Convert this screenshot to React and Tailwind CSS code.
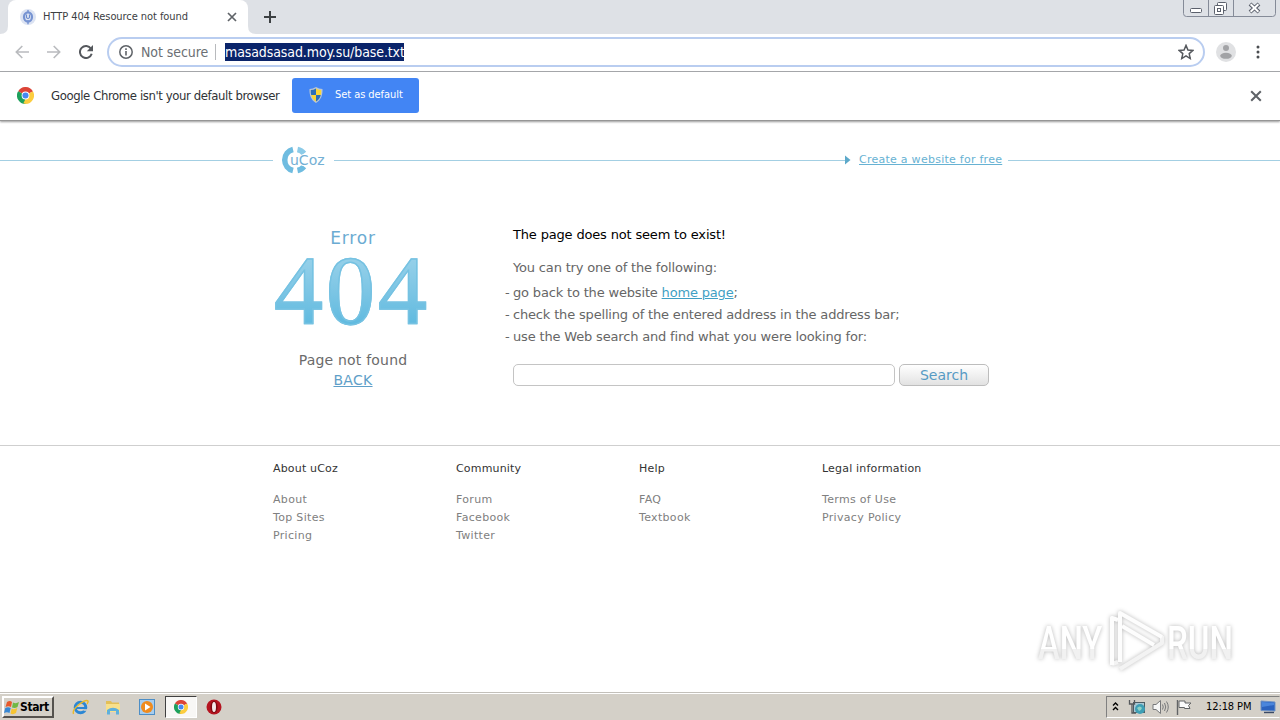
const columns = [
  { title: "About uCoz", links: ["About", "Top Sites", "Pricing"] },
  { title: "Community", links: ["Forum", "Facebook", "Twitter"] },
  { title: "Help", links: ["FAQ", "Textbook"] },
  { title: "Legal information", links: ["Terms of Use", "Privacy Policy"] },
];

const ChromeLogo = ({ size }) => (
  <svg width={size} height={size} viewBox="0 0 48 48">
    <path d="M24 24 L3.2 12 A24 24 0 0 1 44.8 12 Z" fill="#dc4437" />
    <path d="M24 24 L44.8 12 A24 24 0 0 1 24 48 Z" fill="#fccd3f" />
    <path d="M24 24 L24 48 A24 24 0 0 1 3.2 12 Z" fill="#1da05c" />
    <path d="M24 13 H45.3 L44.8 12 H24 Z" fill="#dc4437" />
    <path d="M33.5 29.5 L24 48 L18 46 L24 34 Z" fill="#fccd3f" />
    <circle cx="24" cy="24" r="11" fill="#fff" />
    <circle cx="24" cy="24" r="8.6" fill="#4688f1" />
  </svg>
);

const Cross = ({ size }) => (
  <svg width={size} height={size} viewBox="0 0 10 10" stroke="#5f6368" strokeWidth="1.7">
    <path d="M1 1 L9 9 M9 1 L1 9" />
  </svg>
);

const Favicon = () => (
  <svg width="16" height="16" viewBox="0 0 16 16">
    <circle cx="8" cy="8" r="8" fill="#dce3f2" />
    <ellipse cx="8" cy="8" rx="4" ry="4.6" fill="none" stroke="#7693d2" strokeWidth="2.2" />
    <path d="M8 1 V4 M8 11 V15.2" stroke="#7693d2" strokeWidth="1.4" />
    <path d="M6.5 5.5 V8.5 Q8 10.5 9.5 8.5 V5.5" fill="none" stroke="#6c8bcd" strokeWidth="1.1" />
  </svg>
);

const Shield = () => (
  <svg width="14" height="16" viewBox="0 0 14 16">
    <path d="M7 0 Q10 2 13.5 2 C13.8 8 12 13 7 16 C2 13 0.2 8 0.5 2 Q4 2 7 0 Z" fill="#b9c6d4" />
    <path d="M7 1.5 Q4.5 3 1.8 3 Q1.6 5.5 2.2 8 H7 Z" fill="#2d6fb8" />
    <path d="M7 1.5 Q9.5 3 12.2 3 Q12.4 5.5 11.8 8 H7 Z" fill="#fbd635" />
    <path d="M2.2 8 H7 V14.4 Q3.2 12.2 2.2 8 Z" fill="#fbd635" />
    <path d="M11.8 8 H7 V14.4 Q10.8 12.2 11.8 8 Z" fill="#2d6fb8" />
  </svg>
);

const WindowButtons = () => (
  <svg width="94" height="17" viewBox="0 0 94 17" fill="none">
    <path d="M0.5 0 V13.5 Q0.5 16.5 3.5 16.5 H89.5 Q92.5 16.5 92.5 13.5 V0" stroke="#858b98" />
    <path d="M25.5 0 V16 M50.5 0 V16" stroke="#858b98" />
    <rect x="7.5" y="8.5" width="11" height="4" rx="1" fill="#fff" stroke="#5b606c" />
    <rect x="34.5" y="2.5" width="9" height="8" rx="1" fill="#fff" stroke="#5b606c" />
    <rect x="31.5" y="5.5" width="9" height="9" rx="1" fill="#fff" stroke="#5b606c" />
    <rect x="34.5" y="8.5" width="3" height="3" stroke="#5b606c" />
    <path d="M67 4 L76 12 M76 4 L67 12" stroke="#5b606c" strokeWidth="4" />
    <path d="M67.6 4.3 L75.4 11.7 M75.4 4.3 L67.6 11.7" stroke="#fff" strokeWidth="2" />
  </svg>
);

const TabStrip = () => (
  <div className="flex h-[34px] items-stretch bg-[#dee1e6]">
    <svg width="8" height="34" viewBox="0 0 8 34" className="shrink-0">
      <path d="M0 34 Q8 34 8 26 V34 Z" fill="#fff" />
    </svg>
    <div className="flex w-[240px] items-center rounded-t-lg bg-white pl-3">
      <Favicon />
      <span className="ml-[7px] w-[184px] text-[11px] tracking-[-0.06px] whitespace-nowrap text-[#3c4043]">
        HTTP 404 Resource not found
      </span>
      <Cross size={10} />
    </div>
    <svg width="8" height="34" viewBox="0 0 8 34" className="shrink-0">
      <path d="M8 34 Q0 34 0 26 V34 Z" fill="#fff" />
    </svg>
    <svg width="12" height="12" viewBox="0 0 12 12" className="mt-[11px] ml-2" stroke="#3c4043" strokeWidth="2">
      <path d="M6 0 V12 M0 6 H12" />
    </svg>
    <div className="mr-[3px] ml-auto">
      <WindowButtons />
    </div>
  </div>
);

const Toolbar = () => (
  <div className="flex h-[38px] items-center border-b border-[#a9abae] bg-white pb-px pl-[15px]">
    <svg width="14" height="14" viewBox="0 0 14 14" fill="none" stroke="#b9bbbe" strokeWidth="1.6">
      <path d="M14 7 H1.5 M7.3 1 L1.3 7 L7.3 13" />
    </svg>
    <svg width="14" height="14" viewBox="0 0 14 14" fill="none" stroke="#b9bbbe" strokeWidth="1.6" className="ml-[18px]">
      <path d="M0 7 H12.5 M6.7 1 L12.7 7 L6.7 13" />
    </svg>
    <svg width="14" height="14" viewBox="0 0 14 14" fill="none" className="ml-[18px]">
      <path d="M12 3.8 A6 6 0 1 0 12.7 8.8" stroke="#55585d" strokeWidth="2" />
      <path d="M14 0 V6.2 H7.8 Z" fill="#55585d" />
    </svg>
    <div className="ml-[14px] flex h-[30px] w-[1098px] items-center rounded-full border-2 border-[#b9cdf0] pr-[10px] pl-[10px]">
      <svg width="14" height="14" viewBox="0 0 14 14" fill="none" stroke="#5f6368">
        <circle cx="7" cy="7" r="6.2" strokeWidth="1.5" />
        <path d="M7 6 V10.5 M7 3.3 V4.9" strokeWidth="1.6" />
      </svg>
      <span className="ml-2 w-[74px] text-[14px] leading-4 tracking-[-0.08px] whitespace-nowrap text-[#6b6f74]">
        Not secure
      </span>
      <span className="h-4 w-px bg-[#b8babd]" />
      <span className="ml-[9px] h-[18px] w-[179px] bg-[#0a246a] text-[14px] leading-[18px] tracking-[-0.1px] whitespace-nowrap text-white">
        masadsasad.moy.su/base.txt
      </span>
      <svg width="16" height="16" viewBox="0 0 14 14" fill="none" stroke="#55585d" strokeWidth="1.3" className="-mr-px ml-auto">
        <path d="M7 1.2 L8.7 5.2 L13 5.6 L9.8 8.4 L10.7 12.7 L7 10.4 L3.3 12.7 L4.2 8.4 L1 5.6 L5.3 5.2 Z" />
      </svg>
    </div>
    <svg width="20" height="20" viewBox="0 0 20 20" className="ml-[11px]">
      <circle cx="10" cy="10" r="10" fill="#e0e1e3" />
      <circle cx="10" cy="6" r="3" fill="#a2a3a6" />
      <ellipse cx="10" cy="13.8" rx="5.8" ry="3" fill="#a2a3a6" />
    </svg>
    <svg width="4" height="14" viewBox="0 0 4 14" fill="#4a4d51" className="ml-5">
      <circle cx="2" cy="2" r="1.5" />
      <circle cx="2" cy="7" r="1.5" />
      <circle cx="2" cy="12" r="1.5" />
    </svg>
  </div>
);

const InfoBar = () => (
  <div className="flex h-[49px] items-center border-b border-[#969696] bg-white pr-[18px] pb-[2px] pl-[17px] shadow-[0_1px_2px_rgba(0,0,0,0.4)]">
    <ChromeLogo size={17} />
    <span className="mt-px ml-[17px] w-[241px] text-[13px] tracking-[-0.4px] whitespace-nowrap text-[#303236]">
      Google Chrome isn't your default browser
    </span>
    <button className="flex h-[35px] w-[127px] items-center rounded-[3px] bg-[#4285f4] pl-[17px] text-white">
      <Shield />
      <span className="ml-3 text-[11px] tracking-[-0.06px] whitespace-nowrap">Set as default</span>
    </button>
    <div className="mt-px ml-auto">
      <Cross size={12} />
    </div>
  </div>
);

const UcozLogo = () => (
  <svg width="60" height="32" viewBox="0 0 60 32" className="shrink-0">
    <path d="M20 5.5 A10.8 10.8 0 0 0 20 26.5" fill="none" stroke="#6fbce0" strokeWidth="5.5" />
    <path d="M24.5 5.5 A10.8 10.8 0 0 1 31 9.5" fill="none" stroke="#8ccbe8" strokeWidth="5.5" />
    <path d="M24.5 26.5 A10.8 10.8 0 0 0 31 22.5" fill="none" stroke="#6fbce0" strokeWidth="5.5" />
    <g fontFamily="DejaVu Sans" fontSize="14">
      <text x="17" y="20.5" fill="#74b0d4" stroke="#fff" strokeWidth="2" paintOrder="stroke">
        uCoz
      </text>
    </g>
  </svg>
);

const Footer = () => (
  <div className="mt-[58px] border-t border-[#cfcfcf] pl-[273px]">
    <div className="flex pt-[14px] text-[11px]">
      {columns.map((col) => (
        <div key={col.title} className="w-[183px] whitespace-nowrap">
          <div className="mb-[13px] leading-[18px] tracking-[0.18px] text-[#333]">{col.title}</div>
          {col.links.map((link) => (
            <div key={link} className="leading-[18px] tracking-[0.32px] text-[#808080]">
              {link}
            </div>
          ))}
        </div>
      ))}
    </div>
  </div>
);

const ErrorPage = () => (
  <div className="relative mt-px h-[570px] font-['Verdana','DejaVu_Sans',sans-serif]">
    <div className="flex h-[76px] items-center">
      <div className="h-px w-[273px] bg-[#a3cfe3]" />
      <UcozLogo />
      <div className="ml-px h-px w-[511px] bg-[#a3cfe3]" />
      <svg width="6" height="10" viewBox="0 0 6 10">
        <path d="M0 0.5 L5.5 5 L0 9.5 Z" fill="#5da9ca" />
      </svg>
      <a className="ml-2 w-[149px] text-[11px] leading-4 tracking-[0.26px] whitespace-nowrap text-[#67b2d3] underline">
        Create a website for free
      </a>
      <div className="h-px flex-1 bg-[#a3cfe3]" />
    </div>

    <div className="mt-[29px] flex h-[160px] pl-[273px]">
      <div className="w-[160px] text-center">
        <div className="h-[22px] text-[17px] leading-[22px] tracking-[0.8px] text-[#6babd2]">Error</div>
        <div className="mt-[4px] h-[75px] bg-gradient-to-b from-[#9ad2ea] to-[#5cb9df] bg-clip-text pl-px text-left font-['Liberation_Serif',serif] text-[98px] leading-[75px] tracking-[3px] text-transparent [-webkit-text-stroke:1.4px_#76c2e2]">
          404
        </div>
        <div className="mt-[22px] text-[14px] leading-5 tracking-[0.2px] text-[#6b6b6b]">Page not found</div>
        <a className="block text-[14px] leading-5 tracking-[0.3px] text-[#5f9fc8] underline">BACK</a>
      </div>

      <div className="ml-[72px] text-[13px] tracking-[-0.17px] whitespace-nowrap text-[#666]">
        <div className="pl-2 leading-4 text-black">The page does not seem to exist!</div>
        <div className="mt-[17px] pl-2 leading-4">You can try one of the following:</div>
        <ul className="mt-[6px] leading-[22px]">
          <li className="flex">
            <span className="w-2">-</span>
            <span>
              go back to the website <a className="text-[#3f9fc4] underline">home page</a>;
            </span>
          </li>
          <li className="flex">
            <span className="w-2">-</span>check the spelling of the entered address in the address bar;
          </li>
          <li className="flex">
            <span className="w-2">-</span>use the Web search and find what you were looking for:
          </li>
        </ul>
        <div className="mt-4 flex gap-1 pl-2">
          <input type="text" className="h-[22px] w-[382px] rounded-[5px] border border-[#c4c4c4] bg-white" />
          <button className="h-[22px] w-[90px] rounded-[5px] border border-[#bdbdbd] bg-gradient-to-b from-white to-[#e2e2e2] text-[14px] leading-5 tracking-normal text-[#579bc4]">
            Search
          </button>
        </div>
      </div>
    </div>

    <Footer />

    {/* watermark over the page corner */}
    <svg width="248" height="80" viewBox="0 0 248 80" className="absolute top-[484px] left-[1032px] drop-shadow-[0_0_2px_rgba(0,0,0,0.28)]">
      <defs>
        <linearGradient id="fade" x1="0" y1="0" x2="0" y2="1">
          <stop offset="0.6" stopColor="#fff" />
          <stop offset="0.61" stopColor="#f1f1f1" />
        </linearGradient>
      </defs>
      <g fontFamily="Roboto" fontSize="46" fontWeight="500" fill="url(#fade)">
        <text transform="translate(6 53) scale(0.71 1)">ANY</text>
        <text transform="translate(135 53) scale(0.72 1)">RUN</text>
      </g>
      <g fill="none" strokeWidth="4" strokeLinejoin="round">
        <path d="M88 63 L130 37 V30 M80 58 L86 56" stroke="#f3f3f3" />
        <path d="M88 56 V7 L130 31" stroke="#fdfdfd" />
        <path d="M86 14 L80 12 V59" stroke="#fdfdfd" />
        <path d="M90 20 L122 39" stroke="#fdfdfd" />
      </g>
    </svg>
  </div>
);

const Taskbar = () => (
  <div className="flex h-7 items-center border-t border-[#c3c0ba] bg-[#d4d0c8] pl-[2px] shadow-[inset_0_1px_0_#ffffff]">
    <button className="mt-px flex h-[22px] w-[52px] shrink-0 items-center border-2 border-t-white border-r-[#55524e] border-b-[#55524e] border-l-white text-[12px] font-bold text-black">
      <svg width="16" height="15" viewBox="0 0 16 15" className="shrink-0">
        <path d="M3 2 Q6 0 8 2 L7 7 Q4.5 5.5 1.5 7 Z" fill="#e8592b" />
        <path d="M9 2.5 Q12 4 15 2 L13.5 7 Q11 8.5 8 7.5 Z" fill="#71b844" />
        <path d="M1.3 8 Q4 6.5 6.7 8 L5.5 13 Q3 11.5 0 13 Z" fill="#3787d4" />
        <path d="M7.7 8.5 Q10 10 13.3 8 L12 13 Q9 15 6.5 13.5 Z" fill="#f6c431" />
      </svg>
      <span className="tracking-[-0.4px]">Start</span>
    </button>

    <svg width="17" height="16" viewBox="0 0 17 16" fill="none" className="ml-[18px]">
      <circle cx="8.5" cy="8.5" r="5.3" stroke="#2c87d4" strokeWidth="3" />
      <path d="M4 9 H14" stroke="#2c87d4" strokeWidth="2" />
      <path d="M11.5 11 H15" stroke="#d4d0c8" strokeWidth="1.6" />
      <path d="M1.5 15 Q0 11 7 5.5 Q14 0 16 2 Q16.5 3 15 5" stroke="#e9b92c" strokeWidth="1.4" />
    </svg>
    <svg width="16" height="16" viewBox="0 0 16 16" className="ml-[16px]">
      <path d="M1 2 H6 L7 3.5 H14 V13 H1 Z" fill="#e3bf58" />
      <path d="M1 5 H15 V13 H1 Z" fill="#f8e08b" />
      <path d="M2 15.5 V11 Q8 6.5 14 11 V15.5 H11 V12 H5 V15.5 Z" fill="#5fb0dc" />
    </svg>
    <svg width="16" height="16" viewBox="0 0 16 16" className="ml-[18px]">
      <rect x="0.5" y="0.5" width="15" height="15" fill="#a7cdee" stroke="#4d8ec6" />
      <circle cx="8" cy="8" r="6" fill="#f08b1d" />
      <path d="M6 4.5 L11.5 8 L6 11.5 Z" fill="#fff" />
    </svg>
    <div className="ml-[10px] flex h-[22px] w-[32px] items-center justify-center border border-t-[#404040] border-r-white border-b-white border-l-[#404040] bg-[#f8f7f5]">
      <ChromeLogo size={14} />
    </div>
    <svg width="16" height="16" viewBox="0 0 16 16" className="ml-[9px]">
      <circle cx="8" cy="8" r="7.5" fill="#b51420" />
      <ellipse cx="8" cy="8" rx="3.6" ry="6" fill="#7c0a12" />
      <ellipse cx="8" cy="8" rx="2" ry="5" fill="#f4eaea" />
    </svg>

    <div className="mt-px ml-auto flex h-[22px] w-[174px] items-center border border-t-[#808080] border-r-[#d4d0c8] border-b-white border-l-[#808080] pl-1">
      <svg width="9" height="12" viewBox="0 0 9 12" fill="none" stroke="#000" strokeWidth="1.4">
        <path d="M2 4.5 L4.5 2 L7 4.5 M2 9 L4.5 6.5 L7 9" />
      </svg>
      <svg width="18" height="16" viewBox="0 0 18 16" className="ml-[8px]">
        <rect x="5.5" y="3.5" width="11" height="10" fill="#a9c8d4" stroke="#4d5c63" />
        <path d="M1.5 1 V5 H6.5 V1 M4 5 V14 H8" fill="none" stroke="#56595c" strokeWidth="1.3" />
        <circle cx="12" cy="10" r="5" fill="#3f9fb5" />
        <path d="M9 9 Q12 6 14 9 Q13 12 11 12" fill="#8fd2c4" />
      </svg>
      <svg width="17" height="16" viewBox="0 0 17 16" fill="none" stroke="#77787a" className="ml-[6px]">
        <path d="M1 5.5 H4 L8.5 1.5 V14.5 L4 10.5 H1 Z" fill="#f6f6f6" />
        <path d="M10.5 5.5 Q12 8 10.5 10.5 M12.5 4 Q15 8 12.5 12 M14.5 2.5 Q18 8 14.5 13.5" />
      </svg>
      <svg width="16" height="16" viewBox="0 0 16 16" stroke="#626466" className="ml-[7px]">
        <path d="M1.5 1 V16" strokeWidth="1.4" fill="none" />
        <path d="M3 2 H9 V4 H15 L12.5 6.5 L14 9.5 H8.5 V8.5 H3 Z" fill="#fbfbfb" />
      </svg>
      <span className="ml-[14px] w-[54px] text-[11px] tracking-[-0.1px] whitespace-nowrap text-black">12:18 PM</span>
      <svg width="16" height="14" viewBox="0 0 16 14" className="shrink-0">
        <path d="M1 1 L15 2 V11 L1 10.5 Z" fill="#2b63bf" stroke="#7194c5" />
        <path d="M2 2 L14 2.8 V5 L2 7 Z" fill="#4a86dc" />
        <path d="M4 12.5 H14" stroke="#3a4a66" strokeWidth="1.4" />
      </svg>
    </div>
  </div>
);

const App = () => {
  return (
    <div className="flex h-[720px] w-[1280px] flex-col overflow-hidden bg-white font-['DejaVu_Sans_Condensed','DejaVu_Sans',sans-serif]">
      <TabStrip />
      <Toolbar />
      <InfoBar />
      <ErrorPage />
      <Taskbar />
    </div>
  );
};

export default App;
